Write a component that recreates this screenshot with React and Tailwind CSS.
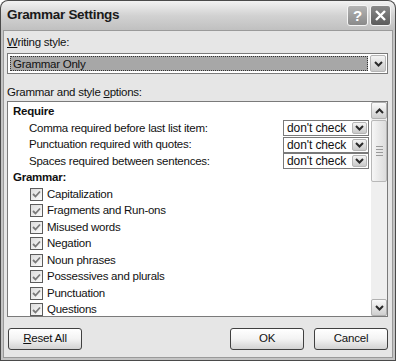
import React from 'react';

// small thick chevron used by combo boxes and the scrollbar
const Chevron = ({ up = false, className = '' }) => (
  <svg width="9" height="6" viewBox="0 0 9 6" className={className}>
    <path
      d={up ? 'M1 5 L4.5 1.5 L8 5' : 'M1 1 L4.5 4.5 L8 1'}
      fill="none"
      stroke="#2a2a2a"
      strokeWidth="2"
    />
  </svg>
);

const SmallCombo = ({ value }) => (
  <div className="w-[86px] h-[16px] flex items-stretch border border-[#7a7a7a] bg-white">
    <div className="flex-1 pl-[3px] text-[12px] leading-[14px] text-[#111] tracking-[-0.1px]">{value}</div>
    <div className="w-[15px] m-px flex items-center justify-center rounded-[2px] bg-gradient-to-b from-[#f4f4f4] to-[#c9c9c9] border border-[#b5b5b5]">
      <Chevron />
    </div>
  </div>
);

const CheckRow = ({ label }) => (
  <div className="h-[16.5px] flex items-center pl-[22px]">
    <div className="w-[13px] h-[13px] border border-[#5c5c5c] bg-gradient-to-br from-[#dcdcdc] to-[#fbfbfb] flex items-center justify-center">
      <svg width="9" height="8" viewBox="0 0 9 8">
        <path d="M1 4 L3.5 6.5 L8 1.5" fill="none" stroke="#7a7a7a" strokeWidth="1.8" />
      </svg>
    </div>
    <span className="ml-[4px]">{label}</span>
  </div>
);

const RequireRow = ({ label }) => (
  <div className="h-[16.5px] flex items-center pl-[21px] pr-[2px]">
    <span className="flex-1">{label}</span>
    <SmallCombo value="don't check" />
  </div>
);

const XpButton = ({ children, className = '' }) => (
  <button
    className={`h-[22px] rounded-[3px] border border-[#404040] bg-gradient-to-b from-[#ffffff] via-[#f3f3f3] to-[#d2d2d2] text-[11.5px] tracking-[-0.2px] text-[#111] ${className}`}
  >
    {children}
  </button>
);

const grammarItems = [
  'Capitalization',
  'Fragments and Run-ons',
  'Misused words',
  'Negation',
  'Noun phrases',
  'Possessives and plurals',
  'Punctuation',
  'Questions',
];

export default function App() {
  return (
    <div className="w-[396px] h-[361px] bg-white font-['Liberation_Sans',Arial,sans-serif] text-[#111] text-[11.5px] tracking-[-0.25px]">
      <div className="h-full flex flex-col rounded-t-[8px] bg-[#4a4a4a] p-px">
        {/* Title bar */}
        <div className="h-[29px] flex items-center rounded-t-[7px] bg-gradient-to-b from-[#f2f2f2] via-[#d2d2d2] to-[#c0c0c0] pl-[6px] pr-[4px]">
          <span className="text-[13.5px] font-bold text-[#1a1a1a] tracking-[-0.3px]">Grammar Settings</span>
          <div className="ml-auto flex gap-[2px]">
            <div className="w-[21px] h-[21px] rounded-[3px] border border-[#f4f4f4] bg-gradient-to-b from-[#b4b4b4] to-[#8a8a8a] flex items-center justify-center text-white text-[15px] font-bold leading-none tracking-normal">
              ?
            </div>
            <div className="w-[21px] h-[21px] rounded-[3px] border border-[#f4f4f4] bg-gradient-to-b from-[#8a8a8a] to-[#5c5c5c] flex items-center justify-center">
              <svg width="13" height="13" viewBox="0 0 13 13">
                <path d="M2 2 L11 11 M11 2 L2 11" stroke="white" strokeWidth="2.4" />
              </svg>
            </div>
          </div>
        </div>

        {/* Body */}
        <div className="flex-1 flex flex-col bg-[#c4c4c4] px-[2px] pb-[2px]">
          <div className="flex-1 flex flex-col bg-[#e6e6e6] border border-[#9a9a9a] pl-[3px] pr-[4px]">
            <div className="mt-[3px] h-[16px] leading-[16px]">
              <span className="underline">W</span>riting style:
            </div>
            <div className="mt-[3px] h-[21px] flex items-stretch border border-[#7a7a7a] bg-white">
              <div className="flex-1 m-[2px] bg-[#a7a7a7] border border-dotted border-[#333] pl-[2px] leading-[14px]">
                Grammar Only
              </div>
              <div className="w-[16px] my-px mr-px flex items-center justify-center rounded-[2px] bg-gradient-to-b from-[#f4f4f4] to-[#c9c9c9] border border-[#b5b5b5]">
                <Chevron />
              </div>
            </div>
            <div className="mt-[10px] h-[16px] leading-[16px]">
              Grammar and style <span className="underline">o</span>ptions:
            </div>

            {/* Options list */}
            <div className="mt-px h-[216px] flex border border-[#7a7a7a] bg-white">
              <div className="flex-1 pt-[1.5px] overflow-hidden">
                <div className="h-[16.5px] flex items-center pl-[5px] font-bold">Require</div>
                <RequireRow label="Comma required before last list item:" />
                <RequireRow label="Punctuation required with quotes:" />
                <RequireRow label="Spaces required between sentences:" />
                <div className="h-[16.5px] flex items-center pl-[5px] font-bold">Grammar:</div>
                {grammarItems.map((item) => (
                  <CheckRow key={item} label={item} />
                ))}
              </div>

              {/* Scrollbar */}
              <div className="w-[16px] flex flex-col bg-[#efefef]">
                <div className="h-[17px] flex items-center justify-center rounded-[2px] border border-[#b0b0b0] bg-gradient-to-b from-[#fafafa] to-[#cfcfcf]">
                  <Chevron up />
                </div>
                <div className="mt-px h-[62px] flex items-center justify-center rounded-[2px] border border-[#b8b8b8] bg-gradient-to-r from-[#f6f6f6] to-[#dcdcdc]">
                  <div className="flex flex-col gap-[2px]">
                    <div className="w-[7px] h-px bg-[#9a9a9a]" />
                    <div className="w-[7px] h-px bg-[#9a9a9a]" />
                    <div className="w-[7px] h-px bg-[#9a9a9a]" />
                    <div className="w-[7px] h-px bg-[#9a9a9a]" />
                  </div>
                </div>
                <div className="flex-1" />
                <div className="h-[17px] flex items-center justify-center rounded-[2px] border border-[#b0b0b0] bg-gradient-to-b from-[#fafafa] to-[#cfcfcf]">
                  <Chevron />
                </div>
              </div>
            </div>

            {/* Buttons */}
            <div className="mt-[11px] flex pl-px">
              <XpButton className="w-[74px]">
                <span className="underline">R</span>eset All
              </XpButton>
              <XpButton className="ml-auto w-[74px]">OK</XpButton>
              <XpButton className="ml-[10px] w-[74px]">Cancel</XpButton>
            </div>
          </div>
        </div>
      </div>
    </div>
  );
}
